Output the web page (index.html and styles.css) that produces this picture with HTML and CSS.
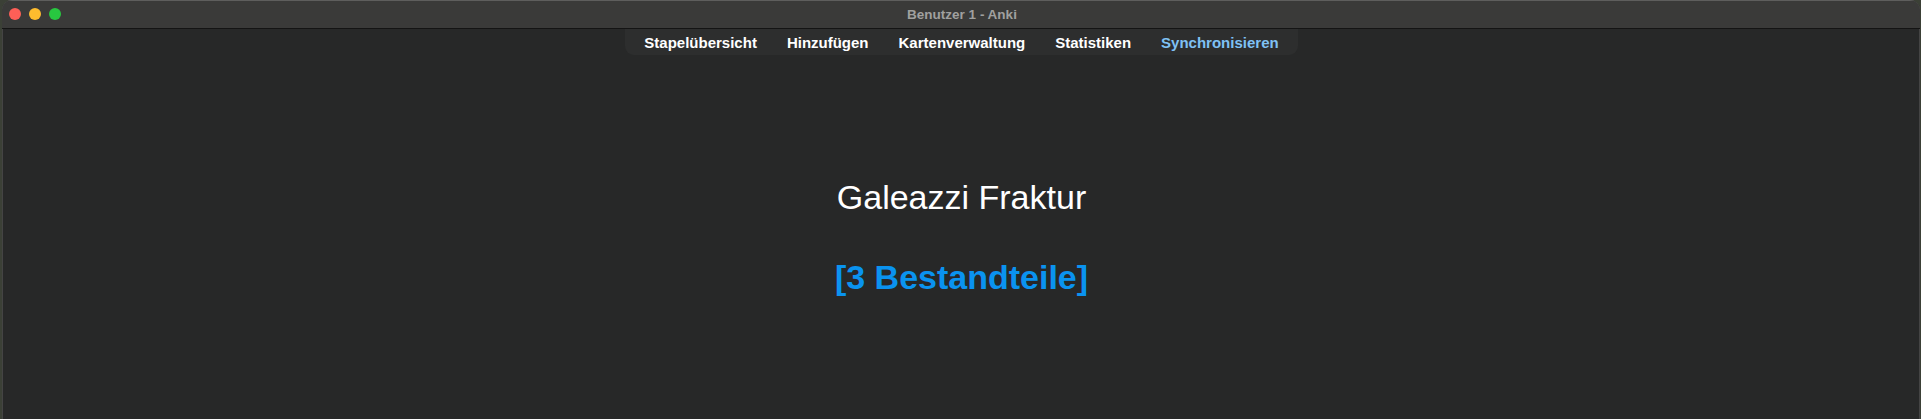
FILE: index.html
```html
<!DOCTYPE html>
<html lang="de">
<head>
    <meta charset="UTF-8">
    <meta name="viewport" content="width=device-width, initial-scale=1.0">
    <title>Benutzer 1 - Anki</title>
    <link rel="stylesheet" href="styles.css">
</head>
<body>
    <div class="window">
        <div class="titlebar">
            <div class="lights">
                <span class="light red"></span>
                <span class="light yellow"></span>
                <span class="light green"></span>
            </div>
            <div class="title">Benutzer 1 - Anki</div>
        </div>
        <div class="toolbar">
            <nav class="tabs">
                <a href="#">Stapelübersicht</a>
                <a href="#">Hinzufügen</a>
                <a href="#">Kartenverwaltung</a>
                <a href="#">Statistiken</a>
                <a href="#" class="sync">Synchronisieren</a>
            </nav>
        </div>
        <div class="card">
            <div class="front">Galeazzi Fraktur</div>
            <div class="cloze">[3 Bestandteile]</div>
        </div>
    </div>
</body>
</html>
```

FILE: styles.css
```css
body {
    margin: 0;
    height: 100vh;
    background-color: #3b4036;
    font-family: "Liberation Sans", Arial, sans-serif;
    overflow: hidden;
}

.window {
    margin-left: 2px;
    margin-right: 1px;
    height: 100%;
    background-color: #272828;
    border-radius: 10px 10px 0 0;
    box-shadow: inset 0 1px 0 #5c5c5b, inset 1px 0 0 #444, inset -1px 0 0 #444;
    overflow: hidden;
}

.titlebar {
    position: relative;
    height: 29px;
    background-color: #3a3a39;
    border-top: 1px solid #5e5e5d;
    border-bottom: 1px solid #141414;
    box-sizing: border-box;
    display: flex;
    align-items: center;
    justify-content: center;
}

.lights {
    position: absolute;
    left: 7px;
    top: 7px;
    display: flex;
    gap: 8px;
}

.light {
    width: 12px;
    height: 12px;
    border-radius: 50%;
}

.red { background-color: #fe5f57; }
.yellow { background-color: #febc2e; }
.green { background-color: #28c840; }

.title {
    color: #a0a09f;
    font-size: 13.5px;
    font-weight: bold;
    margin-left: 2px;
}

.toolbar {
    display: flex;
    justify-content: center;
    padding-left: 1px;
}

.tabs {
    display: flex;
    gap: 30px;
    height: 26px;
    align-items: center;
    padding: 0 19px 0 19px;
    background-color: #2d2e2e;
    border-radius: 0 0 9px 9px;
}

.tabs a {
    color: #ffffff;
    font-size: 15px;
    font-weight: bold;
    text-decoration: none;
}

.tabs a.sync {
    color: #7fc1f4;
}

.card {
    text-align: center;
    padding-top: 122px;
    font-size: 34px;
    line-height: 40px;
    padding-left: 1px;
}

.front {
    color: #ffffff;
}

.cloze {
    margin-top: 40px;
    color: #0a93f0;
    font-weight: bold;
}
```
